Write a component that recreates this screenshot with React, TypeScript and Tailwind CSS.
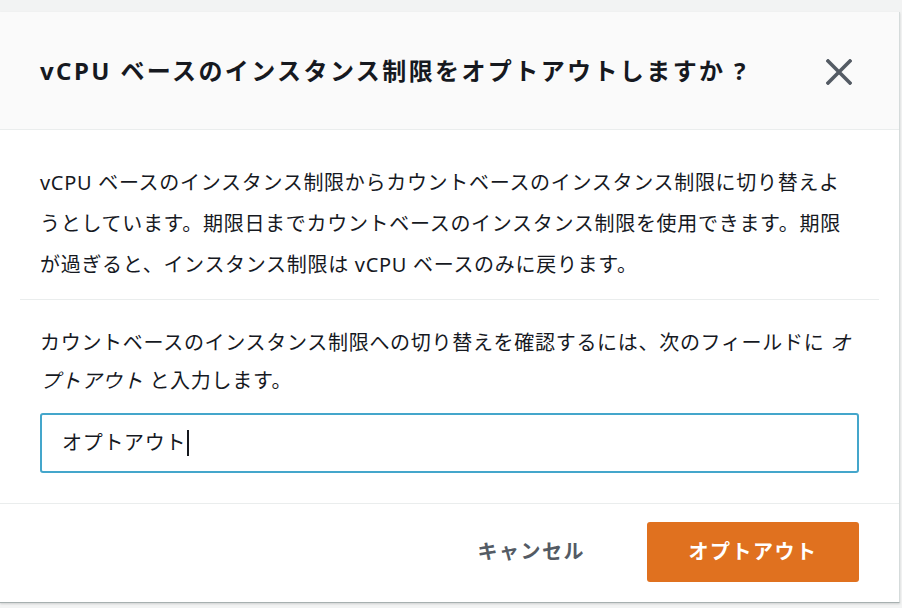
const font = "font-['Noto_Sans','Noto_Sans_CJK_JP',sans-serif]";

const CloseIcon = () => (
  <svg width="26" height="26" viewBox="0 0 26 26" fill="none">
    <path d="M2 2L24 24M24 2L2 24" stroke="#545b64" strokeWidth="3.6" strokeLinecap="square" />
  </svg>
);

const App = () => {
  return (
    <div className={`w-[902px] h-[608px] overflow-hidden bg-[#f2f3f3] text-[#16191f] ${font}`}>
      <div className="h-[12px]" />
      <div className="w-[900px] bg-white border-r border-[#d5dbdb] border-b border-b-[#a7b0b0] shadow-[0_1px_2px_rgba(0,0,0,0.15)]">
        <div className="h-[118px] bg-[#fafafa] border-b border-[#eaeded] flex items-center justify-between pl-10 pr-[47px]">
          <h2 className="text-[24px] font-bold tracking-[2.4px] whitespace-nowrap">
            vCPU ベースのインスタンス制限をオプトアウトしますか ?
          </h2>
          <button className="mt-[2px]">
            <CloseIcon />
          </button>
        </div>

        <div className="px-5">
          <div className="px-5 pt-[32px] pb-[14px] border-b border-[#eaeded] text-[20px] leading-[41px] tracking-[0.7px]">
            <p className="whitespace-nowrap">vCPU ベースのインスタンス制限からカウントベースのインスタンス制限に切り替えよ</p>
            <p className="whitespace-nowrap">うとしています。期限日までカウントベースのインスタンス制限を使用できます。期限</p>
            <p className="whitespace-nowrap">が過ぎると、インスタンス制限は vCPU ベースのみに戻ります。</p>
          </div>

          <div className="px-5 pt-[24px] pb-[30px]">
            <div className="text-[20px] leading-[38px] tracking-[0.7px]">
              <p className="whitespace-nowrap">
                カウントベースのインスタンス制限への切り替えを確認するには、次のフィールドに <i>オ</i>
              </p>
              <p className="whitespace-nowrap">
                <i>プトアウト</i> と入力します。
              </p>
            </div>
            <div className="mt-[13px] h-[60px] rounded-[3px] border-2 border-[#44a6cb] flex items-center pl-[20px] text-[20px] tracking-[0.7px]">
              <span>オプトアウト</span>
              <span className="ml-[1px] w-[2px] h-[26px] bg-[#16191f]" />
            </div>
          </div>
        </div>

        <div className="border-t border-[#eaeded] flex items-center justify-end pt-[18px] pb-[20px] pr-10">
          <button className="text-[20px] font-bold text-[#545b64] tracking-[1.5px] mr-[62px]">キャンセル</button>
          <button className="w-[212px] h-[60px] rounded-[3px] bg-[#e0711f] text-white text-[20px] font-bold tracking-[1.5px]">
            オプトアウト
          </button>
        </div>
      </div>
    </div>
  );
};

export default App;
